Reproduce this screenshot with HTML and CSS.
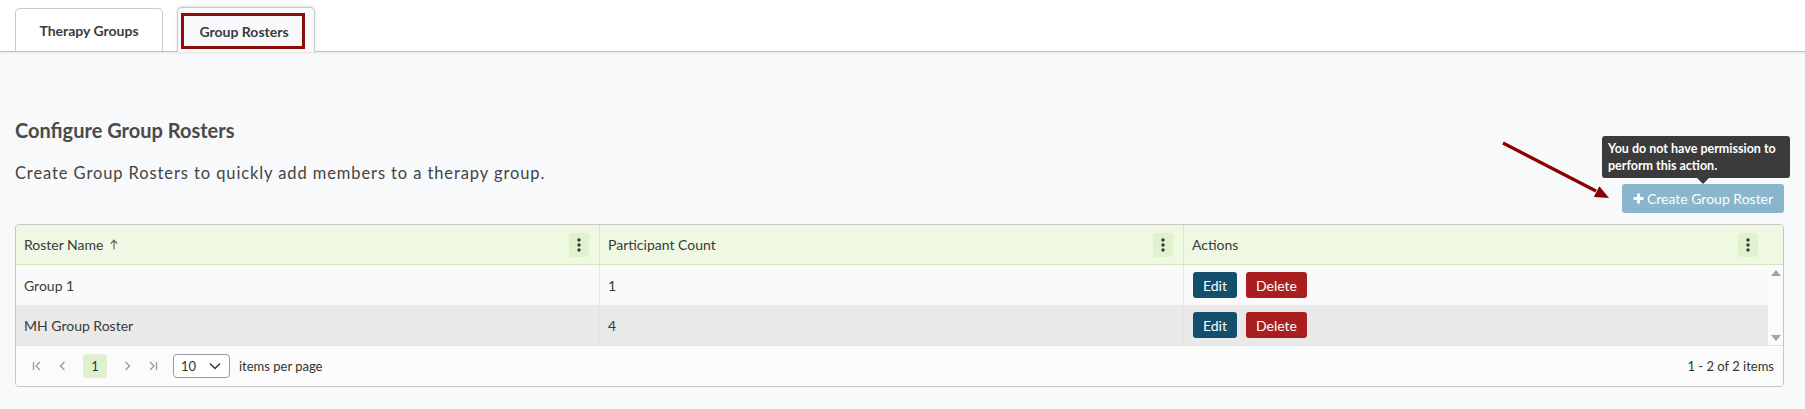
FILE: index.html
```html
<!DOCTYPE html>
<html lang="en">
<head>
<meta charset="utf-8">
<title>Group Rosters</title>
<link rel="stylesheet" href="styles.css">
</head>
<body>
<div class="tabbar">
  <div class="tab">Therapy Groups</div>
  <div class="tab active"><span class="focus">Group Rosters</span></div>
</div>
<main class="content">
  <h2 class="title">Configure Group Rosters</h2>
  <div class="subrow">
    <p class="subtitle">Create Group Rosters to quickly add members to a therapy group.</p>
    <div class="btnwrap">
      <div class="tooltip">You do not have permission to<br>perform this action.</div>
      <button class="create-btn" disabled>
        <svg class="plus" viewBox="0 0 11 11" width="11" height="11"><path d="M5.5 0.5v10M0.5 5.5h10" stroke="#fff" stroke-width="2.8"/></svg>
        Create Group Roster
      </button>
    </div>
  </div>
  <div class="grid">
    <div class="ghead">
      <div class="hcell"><span class="htext">Roster Name <svg class="sort" viewBox="0 0 8 11" width="8" height="11"><path d="M4 10.5V1.5M1 4.5L4 1.2 7 4.5" fill="none" stroke="#666" stroke-width="1.2"/></svg></span><span class="kebab"><svg viewBox="0 0 20 24" width="20" height="24"><circle cx="10" cy="7" r="1.7"/><circle cx="10" cy="12" r="1.7"/><circle cx="10" cy="17" r="1.7"/></svg></span></div>
      <div class="hcell"><span class="htext">Participant Count</span><span class="kebab"><svg viewBox="0 0 20 24" width="20" height="24"><circle cx="10" cy="7" r="1.7"/><circle cx="10" cy="12" r="1.7"/><circle cx="10" cy="17" r="1.7"/></svg></span></div>
      <div class="hcell"><span class="htext">Actions</span><span class="kebab"><svg viewBox="0 0 20 24" width="20" height="24"><circle cx="10" cy="7" r="1.7"/><circle cx="10" cy="12" r="1.7"/><circle cx="10" cy="17" r="1.7"/></svg></span></div>
      <div class="hcell hpad"></div>
    </div>
    <div class="gbody">
      <div class="rows">
        <div class="row">
          <div class="cell">Group 1</div>
          <div class="cell">1</div>
          <div class="cell actions"><button class="btn edit">Edit</button><button class="btn del">Delete</button></div>
        </div>
        <div class="row alt">
          <div class="cell">MH Group Roster</div>
          <div class="cell">4</div>
          <div class="cell actions"><button class="btn edit">Edit</button><button class="btn del">Delete</button></div>
        </div>
      </div>
      <div class="vscroll">
        <svg viewBox="0 0 10 6" width="10" height="6"><path d="M0 6L5 0 10 6z" fill="#a3a3a3"/></svg>
        <svg viewBox="0 0 10 6" width="10" height="6"><path d="M0 0L5 6 10 0z" fill="#a3a3a3"/></svg>
      </div>
    </div>
    <div class="pager">
      <div class="pager-left">
        <span class="pbtn"><svg viewBox="0 0 12 12" width="12" height="12"><path d="M2.5 2v8M9 2L5 6l4 4" fill="none" stroke="#9a9a9a" stroke-width="1.3"/></svg></span>
        <span class="pbtn"><svg viewBox="0 0 12 12" width="12" height="12"><path d="M7.5 2L3.5 6l4 4" fill="none" stroke="#9a9a9a" stroke-width="1.3"/></svg></span>
        <span class="pnum">1</span>
        <span class="pbtn"><svg viewBox="0 0 12 12" width="12" height="12"><path d="M4.5 2l4 4-4 4" fill="none" stroke="#9a9a9a" stroke-width="1.3"/></svg></span>
        <span class="pbtn"><svg viewBox="0 0 12 12" width="12" height="12"><path d="M3 2l4 4-4 4M9.5 2v8" fill="none" stroke="#9a9a9a" stroke-width="1.3"/></svg></span>
        <span class="psize">10<svg viewBox="0 0 12 8" width="12" height="8"><path d="M1 1.5l5 5 5-5" fill="none" stroke="#333" stroke-width="1.4"/></svg></span>
        <span class="plabel">items per page</span>
      </div>
      <div class="pinfo">1 - 2 of 2 items</div>
    </div>
  </div>
</main>
<svg class="annot" viewBox="0 0 130 75" width="130" height="75">
  <line x1="8" y1="10" x2="101" y2="58" stroke="#8b0000" stroke-width="3.2"/>
  <path d="M114 65L98.8 63.9 104.4 53.3z" fill="#8b0000"/>
</svg>
</body>
</html>
```
FILE: styles.css
```css
* { box-sizing: border-box; }
html, body { margin: 0; padding: 0; }
body {
  background: #f8f9fb;
  font-family: Lato, "Open Sans", "Liberation Sans", sans-serif;
  color: #3a3a3a;
  width: 1805px;
  height: 409px;
  overflow: hidden;
  position: relative;
}
.tabbar {
  height: 52px;
  background: #fff;
  border-bottom: 1px solid #c2c2c2;
  box-shadow: 0 1px 2px rgba(0,0,0,0.08);
  display: flex;
  align-items: flex-end;
  gap: 14px;
  padding-left: 15px;
}
.tab {
  height: 43px;
  width: 148px;
  border: 1px solid #c8c8c8;
  border-bottom: none;
  border-radius: 5px 5px 0 0;
  background: #fff;
  display: flex;
  align-items: center;
  justify-content: center;
  font-size: 14px;
  font-weight: 700;
  color: #3c3c3c;
}
.tab.active {
  width: 138px;
  height: 45px;
  margin-bottom: -1px;
  background: #f8f9fb;
  box-shadow: 0 -1px 3px rgba(0,0,0,0.12);
  align-items: flex-start;
  justify-content: flex-start;
  padding: 5px 0 0 3px;
}
.focus {
  width: 124px;
  height: 36px;
  border: 3px solid #8e0b0b;
  display: flex;
  align-items: center;
  justify-content: center;
  padding-left: 2px;
}
.content {
  padding: 66px 21px 0 15px;
}
.title {
  margin: 0;
  font-size: 20px;
  line-height: 24px;
  font-weight: 700;
  color: #4a4a4a;
}
.subrow {
  display: flex;
  justify-content: space-between;
  align-items: flex-start;
  height: 50px;
  margin-top: 21px;
}
.subtitle {
  margin: 0;
  font-size: 16.5px;
  line-height: 20px;
  letter-spacing: 0.9px;
  color: #444;
}
.btnwrap {
  position: relative;
  margin-top: 21px;
}
.create-btn {
  height: 29px;
  width: 162px;
  border: none;
  border-radius: 3px;
  background: #89b5cd;
  color: #fff;
  font-family: inherit;
  font-size: 14px;
  display: flex;
  align-items: center;
  justify-content: center;
  gap: 3px;
  padding: 0;
}
.plus { display: block; }
.tooltip {
  position: absolute;
  right: -6px;
  bottom: 35px;
  width: 188px;
  background: #3b3b3b;
  color: #fff;
  font-size: 12.5px;
  font-weight: 700;
  line-height: 17px;
  padding: 4px 6px;
  border-radius: 3px;
  white-space: nowrap;
}
.tooltip::after {
  content: "";
  position: absolute;
  left: 95px;
  bottom: -6px;
  border-left: 6px solid transparent;
  border-right: 6px solid transparent;
  border-top: 6px solid #3b3b3b;
}
.grid {
  margin-top: 11px;
  border: 1px solid #c6c6c6;
  border-radius: 4px;
  overflow: hidden;
  background: #fbfbfb;
  font-size: 14px;
  color: #3a3a3a;
}
.ghead {
  display: grid;
  grid-template-columns: 1fr 1fr 1fr 15px;
  height: 40px;
  background: #eef8e2;
  border-bottom: 1px solid #d3e4c3;
}
.hcell {
  display: flex;
  align-items: center;
  justify-content: space-between;
  padding: 0 10px 0 8px;
  border-right: 1px solid #dbe8cf;
}
.hcell:nth-child(3), .hpad { border-right: none; }
.hpad { padding: 0; }
.htext { display: flex; align-items: center; gap: 7px; }
.sort { display: block; }
.kebab {
  width: 20px;
  height: 24px;
  border-radius: 4px;
  background: #dff2cc;
  display: block;
}
.kebab svg { display: block; fill: #3a3a3a; }
.gbody {
  display: flex;
}
.rows { flex: 1; }
.row {
  display: grid;
  grid-template-columns: 1fr 1fr 1fr;
  height: 40px;
  background: #fafafa;
}
.row.alt { background: #e9e9e9; }
.cell {
  display: flex;
  align-items: center;
  padding: 0 8px;
  border-right: 1px solid #e4e4e4;
}
.cell:last-child { border-right: none; }
.actions { gap: 9px; padding-left: 9px; }
.btn {
  height: 26px;
  border: none;
  border-radius: 3px;
  color: #fff;
  font-family: inherit;
  font-size: 14px;
  padding: 0;
}
.edit { background: #134e6d; width: 44px; }
.del { background: #a91f20; width: 61px; }
.vscroll {
  width: 15px;
  background: #fbfbfb;
  display: flex;
  flex-direction: column;
  justify-content: space-between;
  align-items: center;
  padding: 5px 0 4px;
}
.vscroll svg { display: block; }
.pager {
  height: 41px;
  border-top: 1px solid #e2e2e2;
  background: #fbfbfb;
  display: flex;
  align-items: center;
  justify-content: space-between;
  padding: 0 9px;
  font-size: 13px;
  color: #333;
}
.pager-left { display: flex; align-items: center; }
.pbtn {
  width: 24px;
  height: 24px;
  display: flex;
  align-items: center;
  justify-content: center;
  margin-right: 2px;
}
.pnum {
  width: 24px;
  height: 24px;
  border-radius: 4px;
  background: #def1cd;
  display: flex;
  align-items: center;
  justify-content: center;
  margin: 0 8px 0 6px;
}
.psize {
  margin-left: 6px;
  width: 57px;
  height: 24px;
  border: 1px solid #9a9a9a;
  border-radius: 4px;
  background: #fff;
  display: flex;
  align-items: center;
  justify-content: space-between;
  padding: 0 8px 0 7px;
}
.psize svg { display: block; }
.plabel { margin-left: 9px; }
.annot {
  position: absolute;
  left: 1495px;
  top: 133px;
}
```
